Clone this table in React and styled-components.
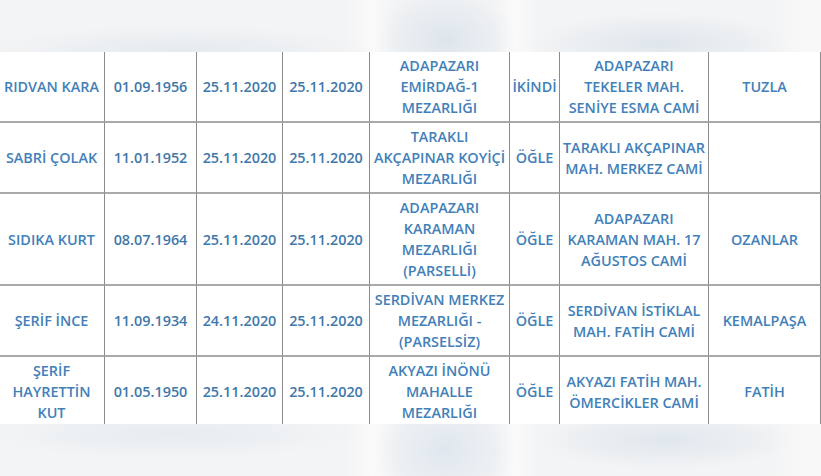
import React from "react";
import styled, { createGlobalStyle } from "styled-components";

const GlobalStyle = createGlobalStyle`
  html, body {
    margin: 0;
    padding: 0;
    background: #f4f5f6;
  }
`;

const Page = styled.div`
  width: 821px;
  height: 476px;
  display: flex;
  flex-direction: column;
  overflow: hidden;
`;

// blurry background strips above and below the table
const Band = styled.div`
  height: 52px;
  flex: none;
  position: relative;
  z-index: 1;
  background-color: #f3f4f5;
  background-image: ${({ bottom }) =>
    bottom
      ? `radial-gradient(ellipse 70px 60px at 445px 26px, #dfe7ee 0%, rgba(223,231,238,0) 100%),
         radial-gradient(ellipse 130px 30px at 665px 16px, #e0e7ed 0%, rgba(224,231,237,0) 100%),
         radial-gradient(ellipse 190px 26px at 170px 10px, #e6ecf0 0%, rgba(230,236,240,0) 100%),
         linear-gradient(90deg, rgba(250,250,250,0) 345px, #fafafa 372px, rgba(250,250,250,0) 398px, rgba(250,250,250,0) 495px, #fafafa 515px, rgba(250,250,250,0) 538px, rgba(250,250,250,0) 770px, #f8f8f8 805px)`
      : `radial-gradient(ellipse 70px 55px at 445px 40px, #dde5ec 0%, rgba(221,229,236,0) 100%),
         radial-gradient(ellipse 130px 32px at 660px 44px, #dfe6ec 0%, rgba(223,230,236,0) 100%),
         radial-gradient(ellipse 200px 28px at 180px 52px, #e5eaef 0%, rgba(229,234,239,0) 100%),
         linear-gradient(90deg, rgba(250,250,250,0) 345px, #fafafa 370px, rgba(250,250,250,0) 395px, rgba(250,250,250,0) 495px, #fafafa 515px, rgba(250,250,250,0) 538px, rgba(250,250,250,0) 770px, #f8f8f8 805px)`};
`;

const Viewport = styled.div`
  height: 372px;
  flex: none;
  overflow: hidden;
  background: #ffffff;
`;

const Table = styled.table`
  width: 822px;
  margin: 0 0 0 -2px;
  table-layout: fixed;
  border-collapse: separate;
  border-spacing: 0;
  border-left: 1px solid #8f8f8f;
  background: #ffffff;
`;

const Cell = styled.td`
  border-right: 1px solid #8c8c8c;
  border-bottom: 2px solid #a9a9a9;
  padding: 3px 1px;
  text-align: center;
  vertical-align: middle;
  font-family: "Open Sans", "Liberation Sans", sans-serif;
  font-weight: 600;
  font-size: 14.4px;
  line-height: 21px;
  color: ${({ date }) => (date ? "#3f78aa" : "#4280b9")};
`;

const Line = styled.span`
  display: block;
  white-space: nowrap;
`;

const widths = [106, 92, 86, 87, 140, 50, 149, 112];

const rows = [
  {
    name: ["RIDVAN KARA"],
    born: "01.09.1956",
    died: "25.11.2020",
    buried: "25.11.2020",
    cemetery: ["ADAPAZARI", "EMİRDAĞ-1", "MEZARLIĞI"],
    prayer: "İKİNDİ",
    mosque: ["ADAPAZARI", "TEKELER MAH.", "SENİYE ESMA CAMİ"],
    district: "TUZLA",
  },
  {
    name: ["SABRİ ÇOLAK"],
    born: "11.01.1952",
    died: "25.11.2020",
    buried: "25.11.2020",
    cemetery: ["TARAKLI", "AKÇAPINAR KOYİÇİ", "MEZARLIĞI"],
    prayer: "ÖĞLE",
    mosque: ["TARAKLI AKÇAPINAR", "MAH. MERKEZ CAMİ"],
    district: "",
  },
  {
    name: ["SIDIKA KURT"],
    born: "08.07.1964",
    died: "25.11.2020",
    buried: "25.11.2020",
    cemetery: ["ADAPAZARI", "KARAMAN", "MEZARLIĞI", "(PARSELLİ)"],
    prayer: "ÖĞLE",
    mosque: ["ADAPAZARI", "KARAMAN MAH. 17", "AĞUSTOS CAMİ"],
    district: "OZANLAR",
  },
  {
    name: ["ŞERİF İNCE"],
    born: "11.09.1934",
    died: "24.11.2020",
    buried: "25.11.2020",
    cemetery: ["SERDİVAN MERKEZ", "MEZARLIĞI -", "(PARSELSİZ)"],
    prayer: "ÖĞLE",
    mosque: ["SERDİVAN İSTİKLAL", "MAH. FATİH CAMİ"],
    district: "KEMALPAŞA",
  },
  {
    name: ["ŞERİF", "HAYRETTİN", "KUT"],
    born: "01.05.1950",
    died: "25.11.2020",
    buried: "25.11.2020",
    cemetery: ["AKYAZI İNÖNÜ", "MAHALLE", "MEZARLIĞI"],
    prayer: "ÖĞLE",
    mosque: ["AKYAZI FATİH MAH.", "ÖMERCİKLER CAMİ"],
    district: "FATİH",
  },
];

const Lines = ({ items }) => items.map((t) => <Line key={t}>{t}</Line>);

const App = () => {
  return (
    <>
      <GlobalStyle />
      <Page>
        <Band />
        <Viewport>
          <Table>
            <colgroup>
              {widths.map((w, i) => (
                <col key={i} style={{ width: w }} />
              ))}
            </colgroup>
            <tbody>
              {rows.map((r) => (
                <tr key={r.name.join(" ")}>
                  <Cell>
                    <Lines items={r.name} />
                  </Cell>
                  <Cell date>{r.born}</Cell>
                  <Cell date>{r.died}</Cell>
                  <Cell date>{r.buried}</Cell>
                  <Cell>
                    <Lines items={r.cemetery} />
                  </Cell>
                  <Cell>{r.prayer}</Cell>
                  <Cell>
                    <Lines items={r.mosque} />
                  </Cell>
                  <Cell>{r.district}</Cell>
                </tr>
              ))}
            </tbody>
          </Table>
        </Viewport>
        <Band bottom />
      </Page>
    </>
  );
};

export default App;
